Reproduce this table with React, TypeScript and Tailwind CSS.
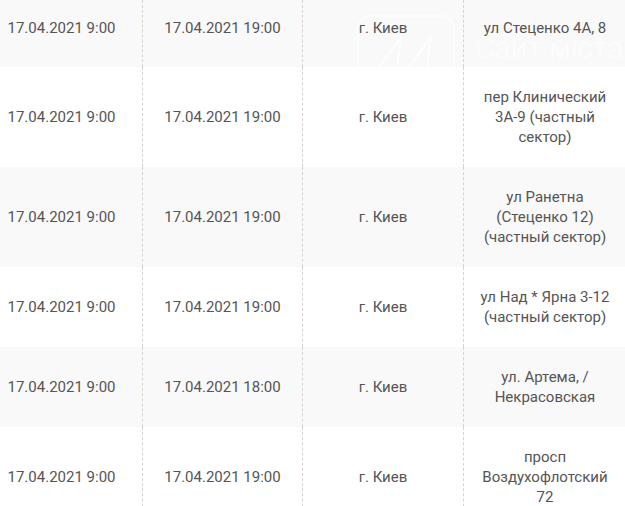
const rows = [
  { from: "17.04.2021 9:00", to: "17.04.2021 19:00", city: "г. Киев", address: "ул Стеценко 4А, 8" },
  { from: "17.04.2021 9:00", to: "17.04.2021 19:00", city: "г. Киев", address: "пер Клинический 3А-9 (частный сектор)" },
  { from: "17.04.2021 9:00", to: "17.04.2021 19:00", city: "г. Киев", address: "ул Ранетна (Стеценко 12) (частный сектор)" },
  { from: "17.04.2021 9:00", to: "17.04.2021 19:00", city: "г. Киев", address: "ул Над * Ярна 3-12 (частный сектор)" },
  { from: "17.04.2021 9:00", to: "17.04.2021 18:00", city: "г. Киев", address: "ул. Артема, / Некрасовская" },
  { from: "17.04.2021 9:00", to: "17.04.2021 19:00", city: "г. Киев", address: "просп Воздухофлотский 72" },
];

const cell = "flex items-center justify-center text-center px-3";

export default function App() {
  return (
    <div className="relative h-[506px] w-[625px] overflow-hidden bg-white font-['Roboto',sans-serif] text-[15px] leading-5 text-[#555]">
      <div className="-ml-[19px] w-[645px]">
        {rows.map((row, i) => (
          <div
            key={i}
            className={`grid grid-cols-[162px_160px_161px_162px] ${i % 2 === 0 ? "bg-[#f9f9f9]" : "bg-white"} ${i === 0 ? "h-[67px]" : ""}`}
          >
            <div className={`${cell} border-r border-dashed border-[#d4d4d4] ${i === 0 ? "pt-[18px] pb-[29px]" : "py-5"}`}>{row.from}</div>
            <div className={`${cell} border-r border-dashed border-[#d4d4d4] ${i === 0 ? "pt-[18px] pb-[29px]" : "py-5"}`}>{row.to}</div>
            <div className={`${cell} border-r border-dashed border-[#d4d4d4] ${i === 0 ? "pt-[18px] pb-[29px]" : "py-5"}`}>{row.city}</div>
            <div className={`${cell} ${i === 0 ? "pt-[18px] pb-[29px]" : "py-5"}`}>{row.address}</div>
          </div>
        ))}
      </div>

      {/* watermark */}
      <div className="pointer-events-none absolute left-[357px] top-[15px] h-[52px] w-[98px] overflow-hidden opacity-80">
        <div className="h-[80px] w-full rounded-[14px] border-2 border-white" />
        <svg className="absolute left-0 top-0" width="98" height="52" viewBox="0 0 98 52" fill="none" stroke="#fff" strokeWidth="2.5">
          <path d="M22 52 L44 22 L40 52" />
          <path d="M52 52 L74 22 L70 52" />
        </svg>
      </div>
      <div className="pointer-events-none absolute left-[475px] top-[30px] font-['Roboto',sans-serif] text-[30px] font-light leading-[36px] text-white opacity-80">
        Сайт міста
      </div>
    </div>
  );
}
